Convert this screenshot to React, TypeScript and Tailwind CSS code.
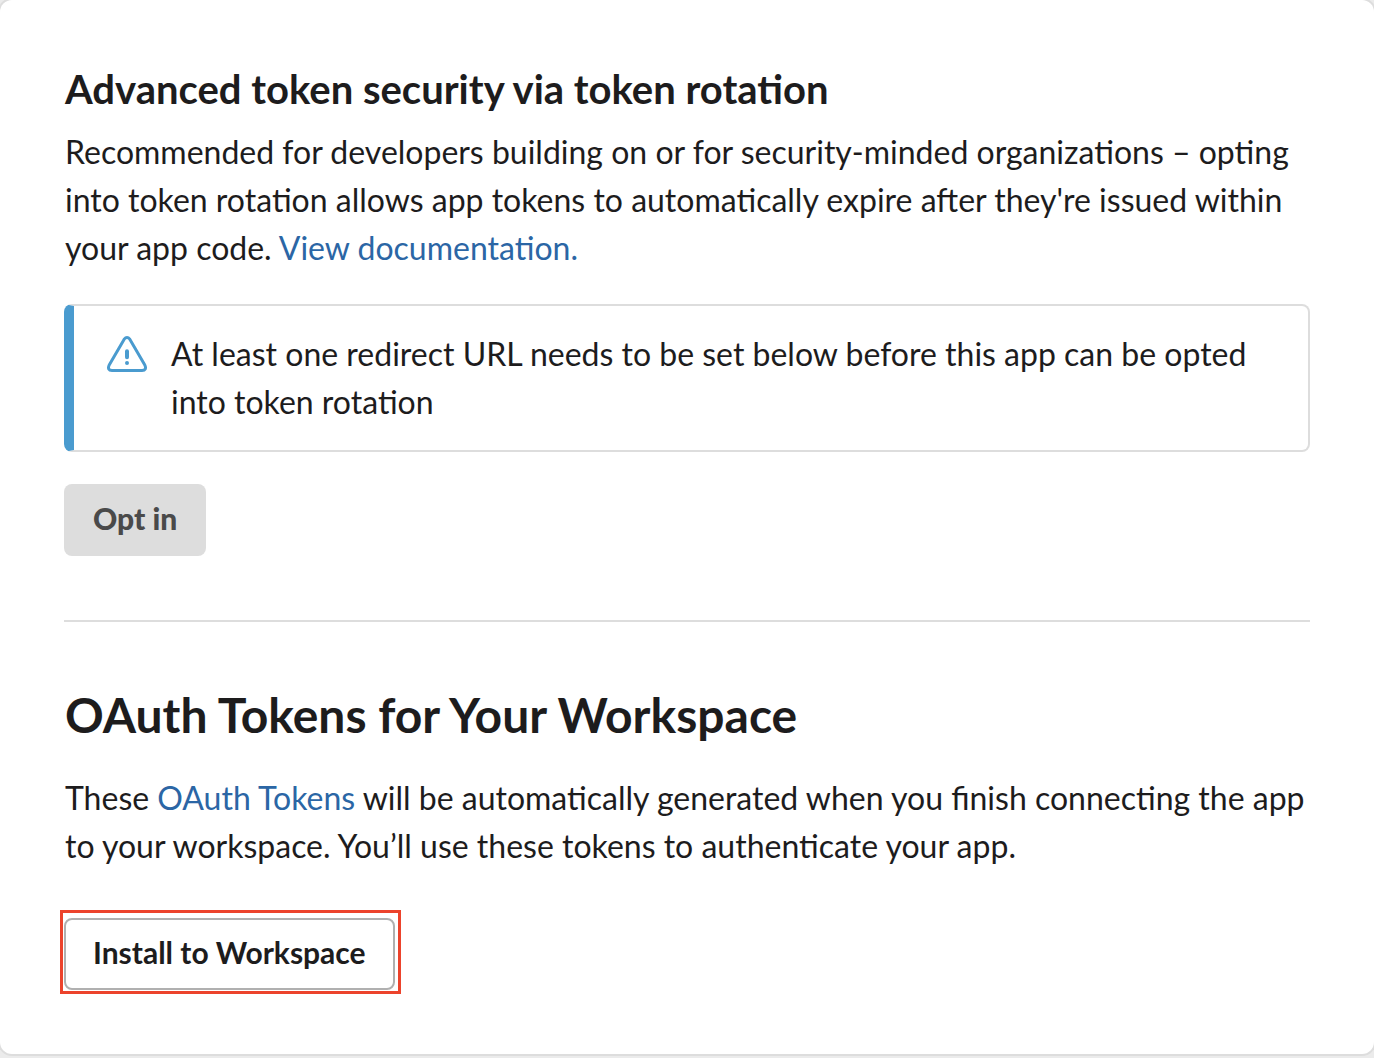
export default function App() {
  return (
    <div className="min-h-screen bg-[#ebebeb] font-['Lato',sans-serif] text-[#1d1c1d]">
      <main className="rounded-xl bg-white px-16 pt-16 pb-15 shadow-[0_0_0_2px_#dddddd]">
        <section className="border-b-2 border-[#dddddd] pb-16">
          <h2 className="pl-px text-[40px] leading-[50px] font-bold">Advanced token security via token rotation</h2>
          <p className="mt-3.5 pl-px text-[32px] leading-12">
            Recommended for developers building on or for security-minded organizations – opting into token rotation allows app tokens to automatically expire after they're issued within your app code.{" "}
            <a href="#docs" className="text-[#2b66a5]">View documentation.</a>
          </p>
          <div className="mt-8 flex gap-6 overflow-hidden rounded-lg border-2 border-l-10 border-[#dddddd] border-l-[#4a9bcf] py-6 pr-8 pl-[33px]">
            <svg className="mt-1 h-10 w-10 shrink-0" viewBox="0 0 40 40" fill="none" stroke="#4a9bcf" strokeLinejoin="round" strokeLinecap="round" aria-hidden="true">
              <path strokeWidth="3" d="M17.2 5.2 L2.2 31 Q-0.1 36.2 5 36.4 H35 Q40.1 36.2 37.8 31 L22.8 5.2 Q20 1.6 17.2 5.2 Z" />
              <path strokeWidth="4" d="M20 17.2v6M20 29v.01" />
            </svg>
            <p className="text-[32px] leading-12">At least one redirect URL needs to be set below before this app can be opted into token rotation</p>
          </div>
          <button type="button" disabled className="mt-8 h-18 rounded-lg bg-[#dddddd] px-[29px] pb-1 text-[30px] font-black text-[#4a4a4a]">Opt in</button>
        </section>
        <section className="pt-16">
          <h1 className="pl-px text-[48px] leading-[58px] font-bold">OAuth Tokens for Your Workspace</h1>
          <p className="mt-[30px] pl-px text-[32px] leading-12">
            These <a href="#tokens" className="text-[#2b66a5]">OAuth Tokens</a> will be automatically generated when you finish connecting the app to your workspace. You’ll use these tokens to authenticate your app.
          </p>
          <div className="mt-10 -ml-1 flex w-fit border-3 border-[#ec432c] pt-[5px] pr-[3px] pb-px pl-px">
            <button type="button" className="h-18 rounded-lg border-2 border-[#b0b0b0] bg-white px-[27px] pb-1 text-[30px] font-bold">Install to Workspace</button>
          </div>
        </section>
      </main>
    </div>
  );
}
